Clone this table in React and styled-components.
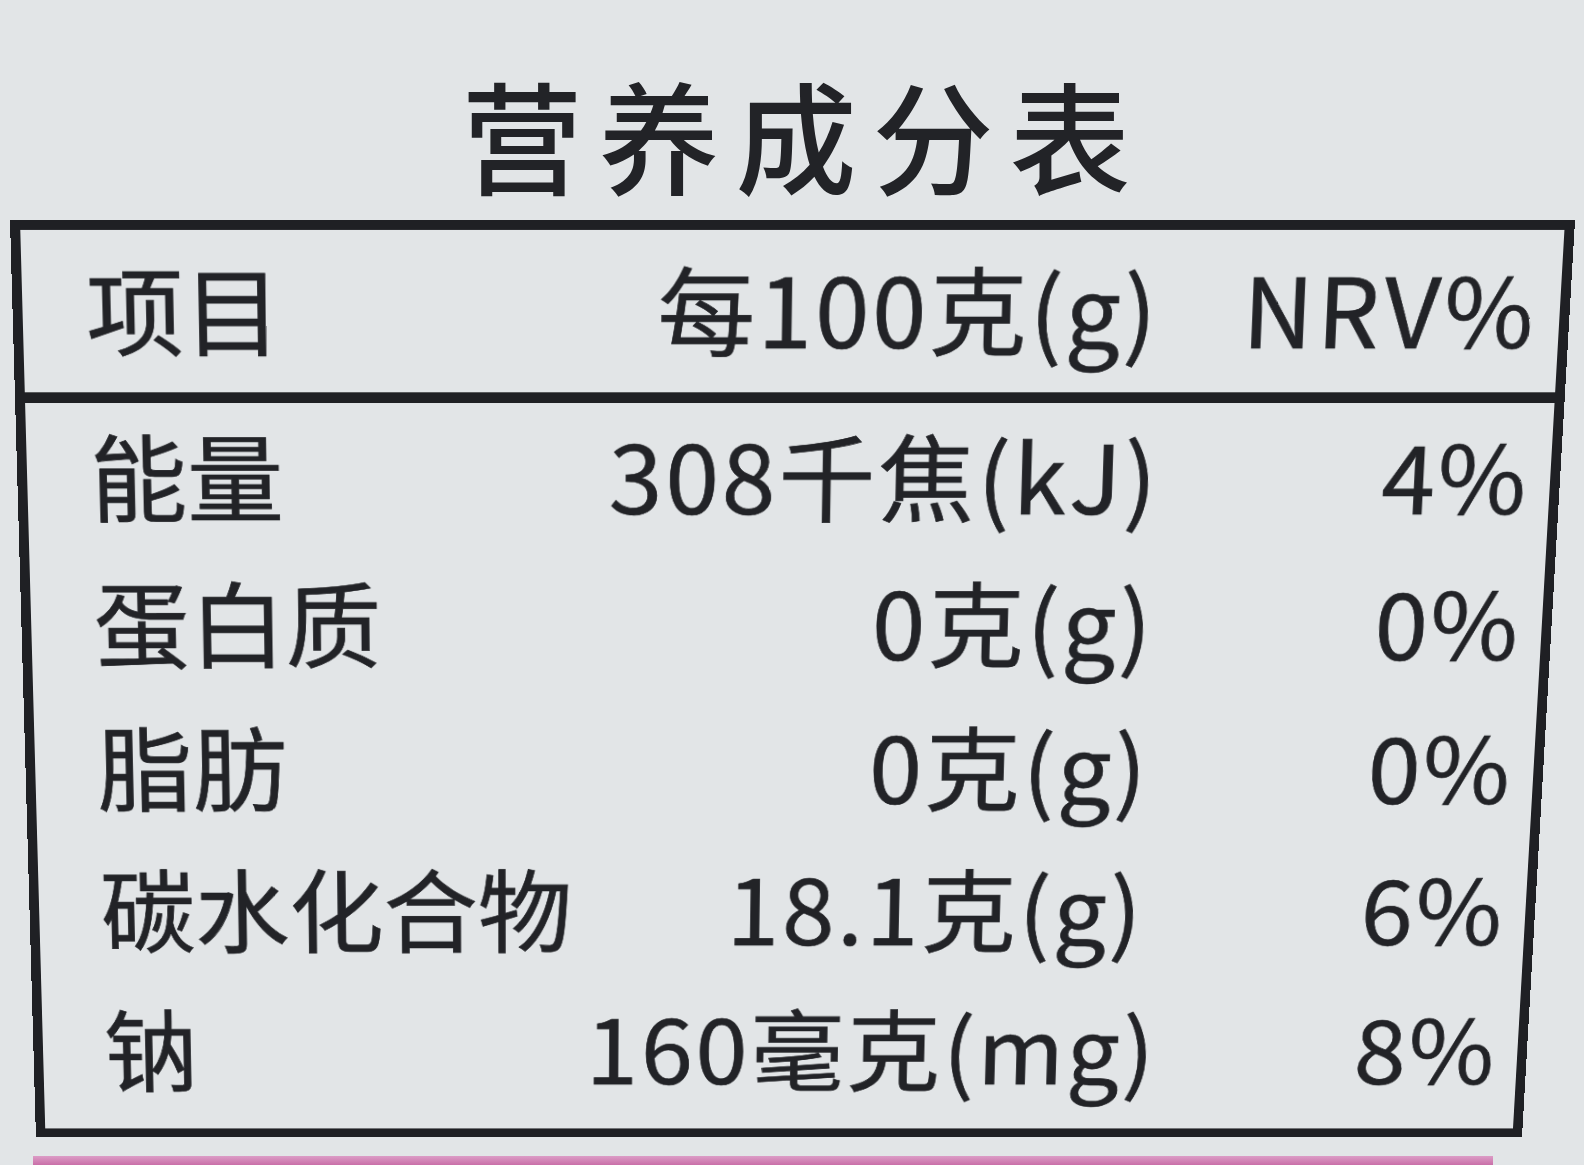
import styled, { createGlobalStyle } from 'styled-components';

const GlobalStyle = createGlobalStyle`
  html, body {
    margin: 0;
    padding: 0;
    height: 100%;
    overflow: hidden;
  }
  body {
    background: #e2e5e7;
    color: #222327;
    font-family: 'Noto Sans CJK SC', 'Noto Sans', sans-serif;
  }
`;

// 营养成分表 rows
const rows = [
  { name: '能量', amount: '308千焦(kJ)', nrv: '4%' },
  { name: '蛋白质', amount: '0克(g)', nrv: '0%' },
  { name: '脂肪', amount: '0克(g)', nrv: '0%' },
  { name: '碳水化合物', amount: '18.1克(g)', nrv: '6%' },
  { name: '钠', amount: '160毫克(mg)', nrv: '8%' },
];

const App = () => {
  return (
    <Page>
      <GlobalStyle />
      <Title>营养成分表</Title>
      <Table>
        <Row $head>
          <Name>项目</Name>
          <Amount $head>每100克(g)</Amount>
          <Nrv $head>NRV%</Nrv>
        </Row>
        <Body>
          {rows.map((r) => (
            <Row key={r.name}>
              <Name>{r.name}</Name>
              <Amount>{r.amount}</Amount>
              <Nrv>{r.nrv}</Nrv>
            </Row>
          ))}
        </Body>
      </Table>
      <Strip />
    </Page>
  );
};

const Page = styled.div`
  height: 100vh;
  overflow: hidden;
  display: flex;
  flex-direction: column;
`;

const Title = styled.h1`
  margin: 72px 0 27px;
  padding-left: 24px;
  text-align: center;
  font-size: 121px;
  line-height: 1;
  font-weight: 500;
  letter-spacing: 16px;
`;

const Table = styled.div`
  flex-shrink: 0;
  margin: 0 0 -55px 10px;
  width: 1565px;
  box-sizing: border-box;
  border: 10px solid #1f2024;
  transform-origin: 50% 0;
  transform: perspective(2000px) rotateX(-6.28deg) skewX(-0.84deg);
`;

const Body = styled.div`
  padding-bottom: 11px;
`;

const Row = styled.div`
  display: grid;
  grid-template-columns: 505px 580px 1fr;
  align-items: center;
  height: ${(p) => (p.$head ? '154.5px' : '145px')};
  padding: 0 22px ${(p) => (p.$head ? '10px' : '8px')} 64px;
  font-size: 98px;
  line-height: 1;
  font-weight: 400;
  -webkit-text-stroke: 0.7px #222327;
  border-bottom: ${(p) => (p.$head ? '11px solid #1f2024' : 'none')};
`;

const Name = styled.div`
  white-space: nowrap;
`;

const Amount = styled.div`
  text-align: right;
  white-space: nowrap;
  letter-spacing: 3px;
  margin-right: ${(p) => (p.$head ? '6px' : '0')};
`;

const Nrv = styled.div`
  text-align: right;
  white-space: nowrap;
  letter-spacing: ${(p) => (p.$head ? '4px' : '2px')};
`;

const Strip = styled.div`
  flex-shrink: 0;
  margin: 19px 0 0 33px;
  width: 1460px;
  height: 30px;
  background: linear-gradient(180deg, #dc9cc6 0, #c96fa8 30%, #c86aa5 100%);
`;

export default App;
